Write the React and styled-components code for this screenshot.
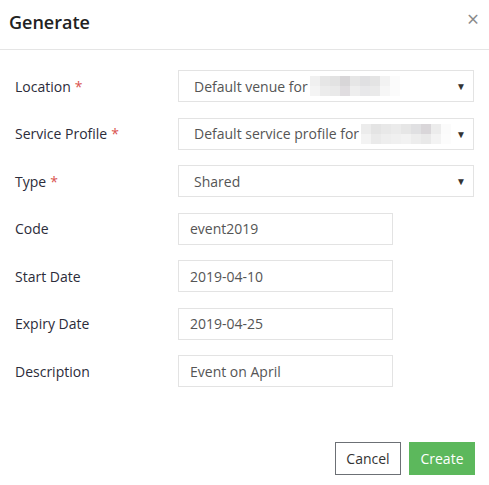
import React from 'react';
import styled, { createGlobalStyle } from 'styled-components';

const GlobalStyle = createGlobalStyle`
  html, body {
    margin: 0;
    padding: 0;
    background: #fff;
  }
  body {
    font-family: "Open Sans", "Noto Sans", sans-serif;
    color: #333;
  }
`;

const Modal = styled.div`
  width: 489px;
  height: 485px;
  display: flex;
  flex-direction: column;
  background: #fff;
  box-sizing: border-box;
`;

const Header = styled.div`
  height: 49px;
  border-bottom: 1px solid #e5e5e5;
  display: flex;
  align-items: center;
  justify-content: space-between;
  padding: 0 10px 0 9px;
  box-sizing: content-box;
`;

const Title = styled.h4`
  margin: 0;
  font-size: 18px;
  font-weight: 600;
  color: #222;
  margin-top: -6px;
`;

const Close = styled.span`
  font-size: 21px;
  color: #8a8a8a;
  line-height: 1;
  margin-top: -10px;
`;

const Body = styled.div`
  flex: 1;
  padding: 20px 15px 0 15px;
  display: flex;
  flex-direction: column;
  gap: 15.5px;
`;

const Row = styled.div`
  display: grid;
  grid-template-columns: 163px 1fr;
  align-items: center;
  height: 32px;
`;

const Label = styled.label`
  font-size: 14px;
  color: #2c2c3a;
`;

const Required = styled.span`
  color: #d9534f;
  margin-left: 4px;
`;

const Field = styled.div`
  height: 32px;
  box-sizing: border-box;
  border: 1px solid #e3e3e3;
  padding: ${p => (p.wide ? '0 7px 0 15px' : '0 12px 0 11px')};
  display: flex;
  align-items: center;
  font-size: 14px;
  color: #555;
  width: ${p => (p.wide ? '296px' : '215px')};
  white-space: nowrap;
  overflow: hidden;
`;

const SelectText = styled.span`
  flex: 1;
  display: flex;
  align-items: center;
  overflow: hidden;
`;

const Caret = styled.span`
  font-size: 10px;
  color: #333;
  margin-left: 4px;
  flex-shrink: 0;
`;

const Redacted = styled.span`
  display: inline-grid;
  flex-shrink: 0;
  grid-template-columns: repeat(${p => p.cols}, 10px);
  grid-template-rows: repeat(2, 10px);
  margin-left: ${p => p.offset}px;
`;

const Pixel = styled.span`
  background: ${p => p.shade};
`;

const Footer = styled.div`
  display: flex;
  justify-content: flex-end;
  gap: 8px;
  padding: 0 14px 10px 0;
`;

const Button = styled.button`
  height: 33px;
  width: 66px;
  font-family: "Open Sans", "Noto Sans", sans-serif;
  font-size: 14px;
  padding: 0;
  cursor: pointer;
  border: 1px solid ${p => (p.primary ? '#5cb85c' : '#6c7075')};
  background: ${p => (p.primary ? '#5cb85c' : '#fff')};
  color: ${p => (p.primary ? '#fff' : '#333')};
`;

const venueShades = [
  '#f0f0f0', '#e6e6e6', '#e2e2e2', '#d8d6d8', '#e6e6e6', '#e0e0e2', '#e4e4e4', '#f2f2f2', '#fbfbfb',
  '#f4f4f4', '#ececec', '#e9e9e9', '#e0dde0', '#eeeeee', '#e8e8ea', '#eaeaea', '#f6f6f6', '#fbfbfb',
];

const profileShades = [
  '#ececec', '#e4e4e4', '#e8e8e8', '#ebebeb', '#e6e6e6', '#e0e0e2', '#d9d6d9', '#ececec', '#fbfbfb',
  '#f3f3f3', '#eaeaea', '#eeeeee', '#f0f0f0', '#f2f2f2', '#ededed', '#e9e9e9', '#f3f3f3', '#fcfcfc',
];

const BlurBlock = ({ shades, offset }) => (
  <Redacted cols={9} offset={offset}>
    {shades.map((s, i) => (
      <Pixel key={i} shade={s} />
    ))}
  </Redacted>
);

const fields = [
  { label: 'Location', required: true, select: true, value: 'Default venue for', blur: venueShades, offset: 2 },
  { label: 'Service Profile', required: true, select: true, value: 'Default service profile for', blur: profileShades, offset: 2 },
  { label: 'Type', required: true, select: true, value: 'Shared' },
  { label: 'Code', value: 'event2019' },
  { label: 'Start Date', value: '2019-04-10' },
  { label: 'Expiry Date', value: '2019-04-25' },
  { label: 'Description', value: 'Event on April' },
];

export default function App() {
  return (
    <>
      <GlobalStyle />
      <Modal>
        <Header>
          <Title>Generate</Title>
          <Close>×</Close>
        </Header>
        <Body>
          {fields.map(f => (
            <Row key={f.label}>
              <Label>
                {f.label}
                {f.required && <Required>*</Required>}
              </Label>
              {f.select ? (
                <Field wide>
                  <SelectText>
                    {f.value}
                    {f.blur && <BlurBlock shades={f.blur} offset={f.offset} />}
                  </SelectText>
                  <Caret>▼</Caret>
                </Field>
              ) : (
                <Field>{f.value}</Field>
              )}
            </Row>
          ))}
        </Body>
        <Footer>
          <Button>Cancel</Button>
          <Button primary>Create</Button>
        </Footer>
      </Modal>
    </>
  );
}
